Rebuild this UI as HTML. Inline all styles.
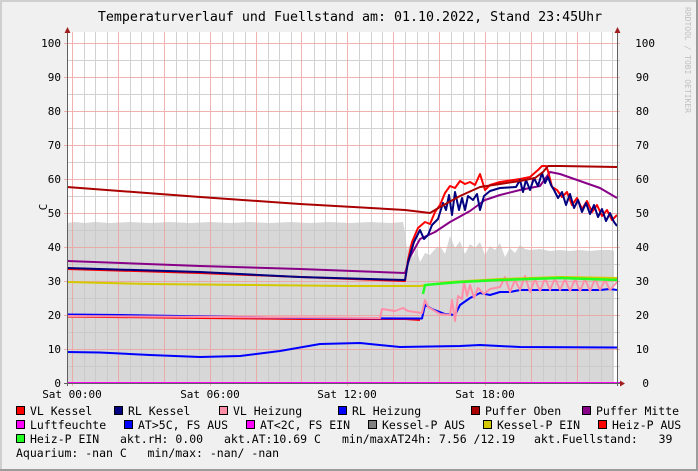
<!DOCTYPE html>
<html><head><meta charset="utf-8"><style>
html,body{margin:0;padding:0;background:#f0f0f0}
svg{display:block}
text{font-family:"DejaVu Sans Mono","Liberation Mono",monospace;fill:#000;white-space:pre}
</style></head><body>
<svg width="698" height="471" viewBox="0 0 698 471" xmlns="http://www.w3.org/2000/svg">
<rect x="0" y="0" width="698" height="471" fill="#f0f0f0"/>
<rect x="0" y="0" width="698" height="2" fill="#cfcfcf"/>
<rect x="0" y="0" width="2" height="471" fill="#cfcfcf"/>
<rect x="696" y="0" width="2" height="471" fill="#9c9c9c"/>
<rect x="0" y="469" width="698" height="2" fill="#9c9c9c"/>
<text x="350" y="21" font-size="13.3" text-anchor="middle">Temperaturverlauf und Fuellstand am: 01.10.2022, Stand 23:45Uhr</text>
<text transform="translate(685,7) rotate(90)" font-size="8" style="fill:#c0c0c0">RRDTOOL / TOBI OETIKER</text>
<text transform="translate(47,207) rotate(-90)" font-size="11" text-anchor="middle">C</text>
<rect x="67" y="32" width="550" height="351" fill="#fff"/>
<polygon fill="#d7d7d7" points="67,383 67,223 75,222 85,223 95,222 110,223 130,222 150,223 170,222 190,223 210,222 230,223 250,222 270,223 290,222 310,223 330,222 350,223 370,222 390,223 403,222 405,232 407,250 410,244 413,258 416,248 420,262 425,253 430,255 436,248 440,246 445,254 450,236 455,248 460,241 465,254 470,244 475,248 480,242 485,255 490,246 495,250 500,243 505,257 510,248 515,253 520,245 525,249 530,250 540,249 550,251 560,250 570,251 580,250 590,251 600,250 610,250 614,251 614,383"/>
<g stroke="#c8c8c8" stroke-width="1" opacity="0.8">
<path d="M84.5,32V383M95.5,32V383M107.5,32V383M130.5,32V383M141.5,32V383M153.5,32V383M176.5,32V383M187.5,32V383M199.5,32V383M222.5,32V383M233.5,32V383M245.5,32V383M268.5,32V383M279.5,32V383M291.5,32V383M314.5,32V383M325.5,32V383M336.5,32V383M359.5,32V383M371.5,32V383M382.5,32V383M405.5,32V383M417.5,32V383M428.5,32V383M451.5,32V383M463.5,32V383M474.5,32V383M497.5,32V383M509.5,32V383M520.5,32V383M543.5,32V383M555.5,32V383M566.5,32V383M589.5,32V383M601.5,32V383M612.5,32V383"/>
<path d="M67,60.5H620M67,94.5H620M67,128.5H620M67,162.5H620M67,196.5H620M67,230.5H620M67,264.5H620M67,298.5H620M67,332.5H620M67,366.5H620"/>
</g>
<g stroke="#f0a0a0" stroke-width="1" opacity="0.8">
<path d="M72.5,32V386M118.5,32V383M164.5,32V383M210.5,32V386M256.5,32V383M301.5,32V383M347.5,32V386M393.5,32V383M439.5,32V383M485.5,32V386M531.5,32V383M577.5,32V383"/>
<path d="M64,43.5H620M64,77.5H620M64,111.5H620M64,145.5H620M64,179.5H620M64,213.5H620M64,247.5H620M64,281.5H620M64,315.5H620M64,349.5H620"/>
</g>
<g fill="none" stroke-width="2" stroke-linejoin="round">
<polyline stroke="#0000ff" points="67,352 100,352.5 150,355 200,357 240,356 280,351 320,344 360,343 400,347 460,346 480,345 520,347 617,347.5"/>
<polyline stroke="#ff0000" points="67,316.5 200,318 300,319 405,319 420,320"/>
<polyline stroke="#0000ff" points="67,314.5 120,315 300,318 422,318.5 425,305 432,309 445,314 455,315 460,305 470,298 480,293 490,295 500,292 510,292 520,290 540,290 560,290 580,290 600,290 610,289 617,290"/>
<polyline stroke="#ff8fa8" points="67,316 380,318 382,309 395,311 403,308 408,311 422,313 425,300 428,307 440,314 450,315 452,300 455,321 458,296 462,299 464,282 467,296 470,285 474,298 478,288 484,294 490,289 500,287 505,277 510,292 515,280 520,290 525,276 530,292 535,279 540,291 545,278 550,290 555,278 560,290 565,279 570,291 575,279 580,291 585,279 590,291 595,279 600,290 605,280 610,290 617,282"/>
<polyline stroke="#d4c800" points="67,282 150,284 250,285 350,286 420,286 450,282 500,279 560,277 617,278"/>
<polyline stroke="#22ff22" stroke-width="2.5" points="423,294 425,285 460,282 500,280 560,278 617,280"/>
<polyline stroke="#880088" points="67,261 200,266 300,269 405,273 410,257 420,239 435,232 450,222 470,211 485,200 500,195 520,190 540,186 550,172 560,174 580,181 600,188 617,198"/>
<polyline stroke="#ff0000" points="67,269 200,273 300,277 405,281 408,260 412,242 418,228 425,222 430,224 435,212 440,205 445,193 450,186 455,188 460,181 465,184 470,182 475,185 480,174 485,190 490,185 500,182 520,179 530,177 538,170 542,166 546,166 548,171 552,187 557,190 562,197 567,192 572,205 577,198 582,209 587,201 592,212 597,205 602,216 607,210 612,220 617,215"/>
<polyline stroke="#000080" points="67,268 200,272 300,277 405,280 408,262 414,242 420,230 424,239 428,235 432,225 438,219 443,203 446,210 449,195 452,215 455,192 459,210 462,198 465,210 468,196 473,200 477,194 480,210 484,196 490,191 500,188 516,187 520,180 523,192 526,180 530,190 534,178 538,186 542,173 545,183 548,177 551,185 554,190 558,198 562,192 566,205 570,194 574,208 578,200 582,212 586,203 590,214 594,205 598,217 602,209 606,221 610,213 614,222 617,226"/>
<polyline stroke="#aa0000" points="67,187 200,197 300,204 405,210 430,213 440,207 460,196 480,187 500,184 520,181 535,178 543,172 548,166 560,166 617,167"/>
</g>
<line x1="67" y1="383" x2="620" y2="383" stroke="#ff00ff" stroke-width="2"/>
<line x1="67.5" y1="28" x2="67.5" y2="386" stroke="#606060"/>
<line x1="617.5" y1="28" x2="617.5" y2="386" stroke="#606060"/>
<line x1="64" y1="383.5" x2="622" y2="383.5" stroke="#606060"/>
<polygon points="64.5,33 70.5,33 67.5,27" fill="#a02020"/>
<polygon points="614.5,33 620.5,33 617.5,27" fill="#a02020"/>
<polygon points="620,380.5 620,386.5 625,383.5" fill="#a02020"/>
<g font-size="11" text-anchor="end">
<text x="61" y="47">100</text><text x="61" y="81">90</text><text x="61" y="115">80</text><text x="61" y="149">70</text><text x="61" y="183">60</text><text x="61" y="217">50</text><text x="61" y="251">40</text><text x="61" y="285">30</text><text x="61" y="319">20</text><text x="61" y="353">10</text><text x="61" y="387">0</text>
<text x="655" y="47">100</text><text x="649" y="81">90</text><text x="649" y="115">80</text><text x="649" y="149">70</text><text x="649" y="183">60</text><text x="649" y="217">50</text><text x="649" y="251">40</text><text x="649" y="285">30</text><text x="649" y="319">20</text><text x="649" y="353">10</text><text x="649" y="387">0</text>
</g>
<g font-size="11" text-anchor="middle">
<text x="72" y="398">Sat 00:00</text><text x="210" y="398">Sat 06:00</text><text x="347" y="398">Sat 12:00</text><text x="485" y="398">Sat 18:00</text>
</g>
<g stroke="#000" stroke-width="1">
<rect x="16.5" y="406.5" width="8" height="8" fill="#ff0000"/>
<rect x="114.5" y="406.5" width="8" height="8" fill="#000080"/>
<rect x="219.5" y="406.5" width="8" height="8" fill="#ff8fa8"/>
<rect x="338.5" y="406.5" width="8" height="8" fill="#0000ff"/>
<rect x="471.5" y="406.5" width="8" height="8" fill="#aa0000"/>
<rect x="582.5" y="406.5" width="8" height="8" fill="#880088"/>
<rect x="16.5" y="420.5" width="8" height="8" fill="#ff00ff"/>
<rect x="124.5" y="420.5" width="8" height="8" fill="#0000ff"/>
<rect x="246.5" y="420.5" width="8" height="8" fill="#ff00ff"/>
<rect x="368.5" y="420.5" width="8" height="8" fill="#808080"/>
<rect x="483.5" y="420.5" width="8" height="8" fill="#d4c800"/>
<rect x="598.5" y="420.5" width="8" height="8" fill="#ff0000"/>
<rect x="16.5" y="434.5" width="8" height="8" fill="#22ff22"/>
</g>
<g font-size="11.5">
<text x="30" y="415">VL Kessel</text><text x="128" y="415">RL Kessel</text><text x="233" y="415">VL Heizung</text><text x="352" y="415">RL Heizung</text><text x="485" y="415">Puffer Oben</text><text x="596" y="415">Puffer Mitte</text>
<text x="30" y="429">Luftfeuchte</text><text x="138" y="429">AT&gt;5C, FS AUS</text><text x="260" y="429">AT&lt;2C, FS EIN</text><text x="382" y="429">Kessel-P AUS</text><text x="497" y="429">Kessel-P EIN</text><text x="612" y="429">Heiz-P AUS</text>
<text x="30" y="443">Heiz-P EIN</text><text x="120" y="443">akt.rH: 0.00</text><text x="224" y="443">akt.AT:10.69 C</text><text x="342" y="443">min/maxAT24h: 7.56 /12.19</text><text x="534" y="443">akt.Fuellstand:   39</text>
<text x="16" y="457">Aquarium: -nan C   min/max: -nan/ -nan</text>
</g>
</svg>
</body></html>
